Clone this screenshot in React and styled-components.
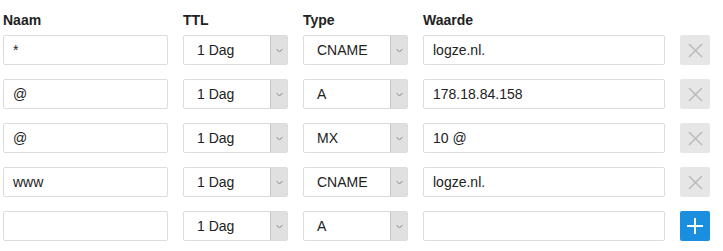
import React from "react";
import styled, { createGlobalStyle } from "styled-components";

const Global = createGlobalStyle`
  html, body { margin: 0; padding: 0; background: #fff; }
  body { font-family: "Liberation Sans", Arial, sans-serif; color: #222; }
`;

const Table = styled.div`
  display: grid;
  grid-template-columns: 165px 105px 105px 242px 30px;
  column-gap: 15px;
  row-gap: 14px;
  padding: 11px 0 0 3px;
  align-items: center;
`;

const Head = styled.div`
  font-size: 14px;
  font-weight: bold;
  line-height: 18px;
  color: #222;
  margin-bottom: -8px;
`;

const Field = styled.div`
  box-sizing: border-box;
  height: 30px;
  border: 1px solid #dcdcdc;
  border-radius: 2px;
  background: #fff;
  display: flex;
  align-items: center;
  padding-left: ${(p) => p.$pad || 9}px;
  font-size: 14px;
  color: #222;
  white-space: nowrap;
  overflow: hidden;
`;

const SelectBox = styled.div`
  box-sizing: border-box;
  height: 30px;
  border: 1px solid #dcdcdc;
  border-radius: 2px;
  background: #fff;
  display: flex;
  align-items: stretch;
  font-size: 14px;
  color: #222;
`;

const SelectValue = styled.div`
  flex: 1;
  display: flex;
  align-items: center;
  padding-left: 13px;
`;

const Arrow = styled.div`
  width: 16px;
  background: #e0e0e0;
  border-left: 1px solid #c8c8c8;
  display: flex;
  align-items: center;
  justify-content: center;
`;

const Btn = styled.div`
  width: 30px;
  height: 30px;
  border-radius: 2px;
  background: ${(p) => (p.$add ? "#1a8fe0" : "#e6e6e6")};
  display: flex;
  align-items: center;
  justify-content: center;
`;

const Chevron = () => (
  <svg width="7" height="5" viewBox="0 0 7 5">
    <path d="M0.5 1 L3.5 4 L6.5 1" fill="none" stroke="#888" strokeWidth="1" />
  </svg>
);

const Select = ({ value }) => (
  <SelectBox>
    <SelectValue>{value}</SelectValue>
    <Arrow>
      <Chevron />
    </Arrow>
  </SelectBox>
);

const rows = [
  { naam: "*", type: "CNAME", waarde: "logze.nl." },
  { naam: "@", type: "A", waarde: "178.18.84.158" },
  { naam: "@", type: "MX", waarde: "10 @" },
  { naam: "www", type: "CNAME", waarde: "logze.nl." },
];

export default function App() {
  return (
    <>
      <Global />
      <Table>
        <Head>Naam</Head>
        <Head>TTL</Head>
        <Head>Type</Head>
        <Head>Waarde</Head>
        <Head />
        {rows.map((r, i) => (
          <React.Fragment key={i}>
            <Field>{r.naam}</Field>
            <Select value="1 Dag" />
            <Select value={r.type} />
            <Field>{r.waarde}</Field>
            <Btn>
              <svg width="15" height="15" viewBox="0 0 15 15">
                <path d="M1 1 L14 14 M14 1 L1 14" stroke="#b8b8b8" strokeWidth="1.4" />
              </svg>
            </Btn>
          </React.Fragment>
        ))}
        <Field />
        <Select value="1 Dag" />
        <Select value="A" />
        <Field />
        <Btn $add>
          <svg width="16" height="16" viewBox="0 0 16 16">
            <path d="M8 0 V16 M0 8 H16" stroke="#fff" strokeWidth="2" />
          </svg>
        </Btn>
      </Table>
    </>
  );
}
